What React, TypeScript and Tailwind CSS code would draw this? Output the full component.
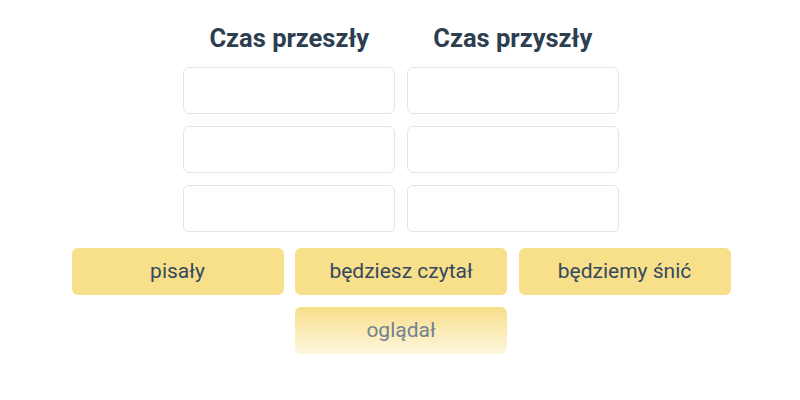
const columns = ["Czas przeszły", "Czas przyszły"];
const choices = ["pisały", "będziesz czytał", "będziemy śnić"];

export default function App() {
	return (
		<div className="w-[800px] h-[400px] bg-white flex flex-col items-center pt-[23px] pl-[2px]" style={{ fontFamily: "Roboto, 'Noto Sans', sans-serif" }}>
			<div className="flex gap-[11.5px]">
				{columns.map((title) => (
					<div key={title} className="w-[212px] flex flex-col gap-[12px]">
						<h2 className="text-center text-[25.5px] leading-[32px] font-bold text-[#2c3e50] -mt-[1px] mb-[1px]">{title}</h2>
						{[0, 1, 2].map((i) => (
							<div key={i} className="h-[47px] rounded-[6px] border border-[#dfe5e8] bg-white" />
						))}
					</div>
				))}
			</div>
			<div className="flex flex-wrap justify-center gap-x-[11.5px] gap-y-[12px] w-[660px] mt-[16px]">
				{choices.map((c) => (
					<div key={c} className="w-[212px] h-[47px] rounded-[6px] bg-[#f8e08a] flex items-center justify-center text-[21px] text-[#34495e]">
						{c}
					</div>
				))}
				<div className="w-[212px] h-[47px] rounded-[6px] bg-gradient-to-b from-[#f8de88] to-[#fdf6dd] flex items-center justify-center text-[21px] text-[#74828f]">
					oglądał
				</div>
			</div>
		</div>
	);
}
